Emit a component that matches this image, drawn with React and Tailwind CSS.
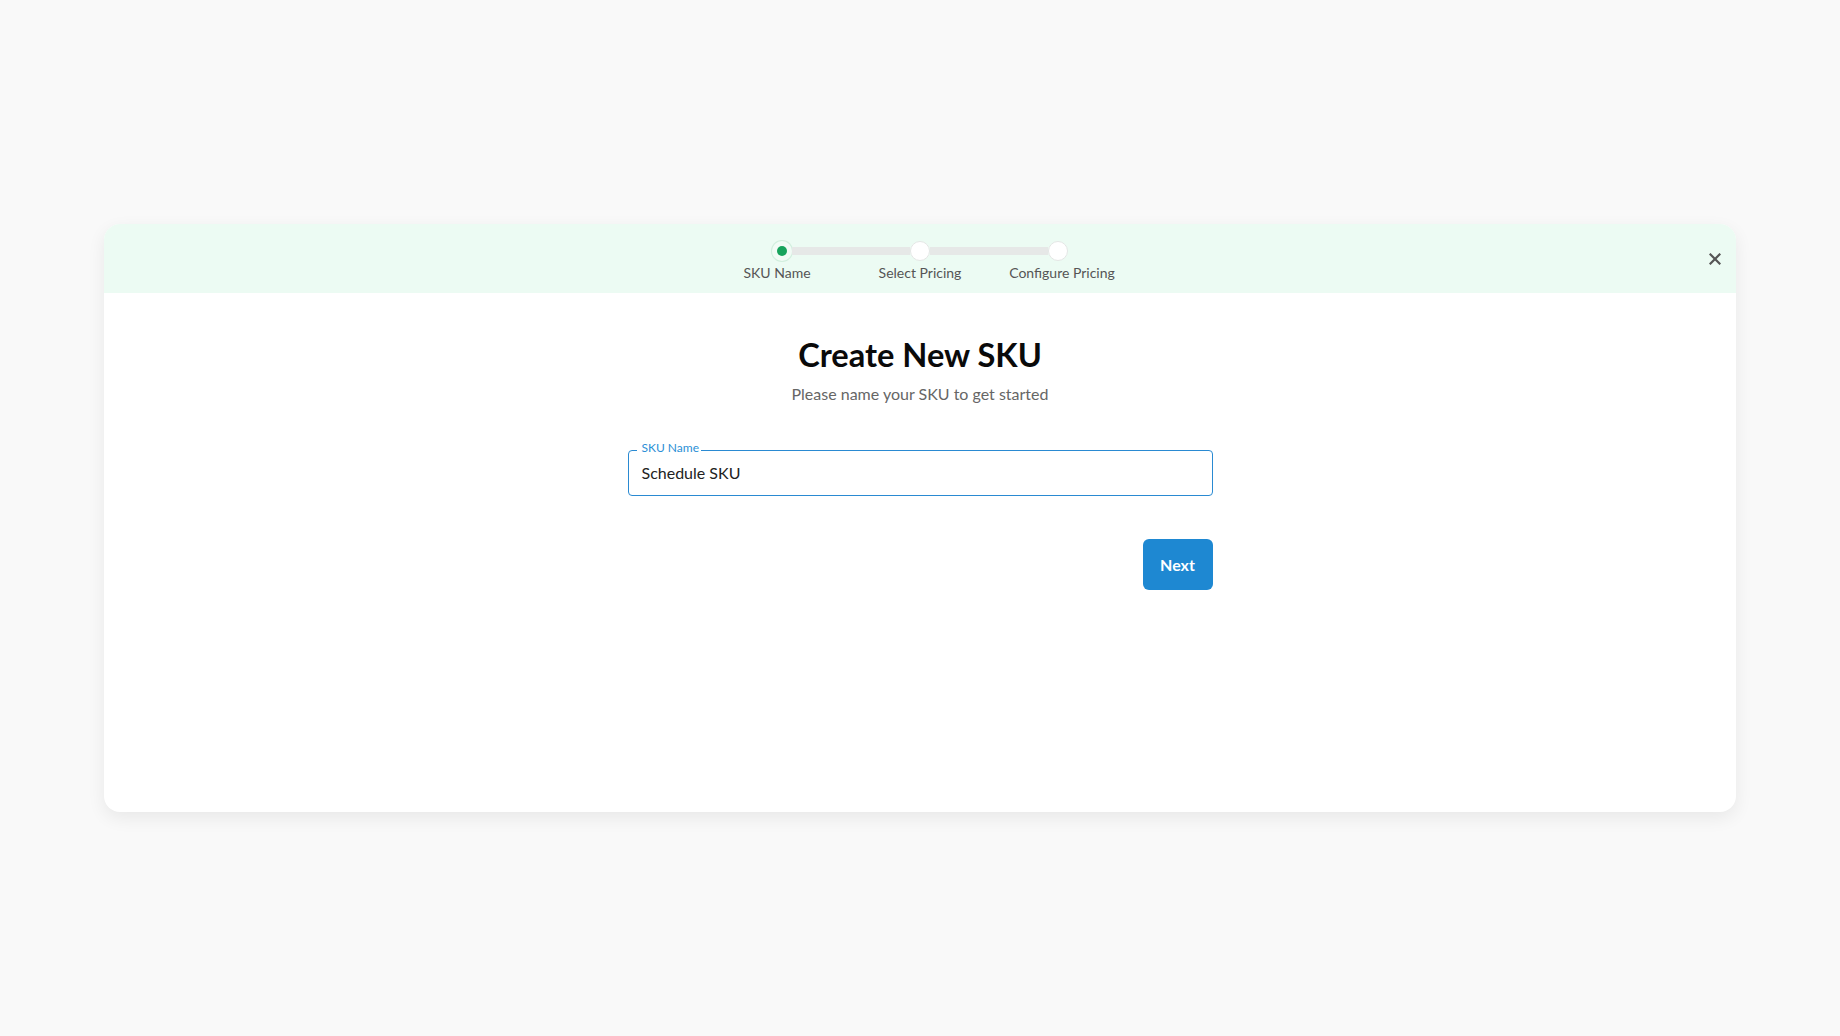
import React from "react";

export default function App() {
  return (
    <div
      className="w-full min-h-[1036px] bg-[#f9f9f9] flex items-center justify-center"
      style={{ fontFamily: "Lato, 'Open Sans', sans-serif" }}
    >
      <div className="w-[1632px] h-[588px] bg-white rounded-[16px] overflow-hidden shadow-[0_6px_18px_rgba(0,0,0,0.07)] flex flex-col">
        {/* Header */}
        <div className="h-[69px] bg-[#ecfbf3] grid grid-cols-[1fr_auto_1fr] shrink-0">
          <div />
          <div className="flex flex-col items-center pt-[17px]">
            <div className="flex items-center">
              <div className="w-[20px] h-[20px] rounded-full bg-[#f1fbf5] shadow-[0_0_0_1px_rgba(205,236,218,0.9)] flex items-center justify-center">
                <div className="w-[10px] h-[10px] rounded-full bg-[#17a35c]" />
              </div>
              <div className="w-[118px] h-[8px] bg-[#e6e8e7]" />
              <div className="w-[20px] h-[20px] rounded-full bg-white border border-[#e4e6e5]" />
              <div className="w-[118px] h-[8px] bg-[#e6e8e7]" />
              <div className="w-[20px] h-[20px] rounded-full bg-white border border-[#e4e6e5]" />
            </div>
            <div className="grid grid-cols-[138px_138px_138px] mt-[3px] text-[14px] leading-[17px] text-[#555555]">
              <div className="flex justify-center mr-[10px] whitespace-nowrap">SKU Name</div>
              <div className="flex justify-center whitespace-nowrap">Select Pricing</div>
              <div className="flex justify-center ml-[8px] whitespace-nowrap">Configure Pricing</div>
            </div>
          </div>
          <div className="flex items-center justify-end pr-[15px]">
            <svg width="12" height="12" viewBox="0 0 12 12">
              <path d="M1.5 1.5 L10.5 10.5 M10.5 1.5 L1.5 10.5" stroke="#555555" strokeWidth="2.2" strokeLinecap="square" />
            </svg>
          </div>
        </div>

        {/* Body */}
        <div className="flex flex-col items-center pt-[42px]">
          <h1 className="text-[32.6px] leading-[40px] font-bold text-[#0a0a0a]">Create New SKU</h1>
          <p className="mt-[9px] text-[16px] leading-[20px] text-[#666666]">
            Please name your SKU to get started
          </p>

          <div className="w-[585px] mt-[46px] flex flex-col">
            <div className="relative h-[46px] border border-[#2a8ad2] rounded-[4px] flex items-center px-[13px]">
              <span className="absolute -top-[9px] left-[8px] bg-white pl-[5px] pr-[2px] text-[12px] leading-[12px] text-[#2b8fd6]">
                SKU Name
              </span>
              <span className="text-[16px] leading-[20px] text-[#222222]">Schedule SKU</span>
            </div>

            <div className="flex justify-end mt-[43px]">
              <button className="w-[70px] h-[51px] rounded-[6px] bg-[#1e88d2] text-white text-[16px] font-bold">
                Next
              </button>
            </div>
          </div>
        </div>
      </div>
    </div>
  );
}
